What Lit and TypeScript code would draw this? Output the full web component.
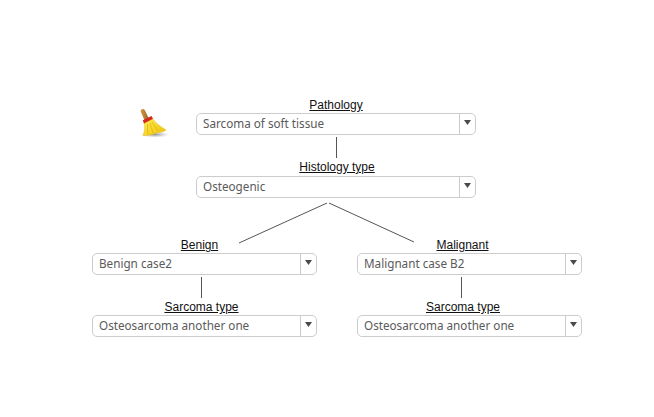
import { LitElement, html, css } from "lit";
import { customElement, property } from "lit/decorators.js";

@customElement("tree-node")
class TreeNode extends LitElement {
  @property() label = "";
  @property() value = "";
  @property({ type: Number }) shift = 0;
  static styles = css`
    :host { display: block; }
    .label { height: 15px; line-height: 15px; font-size: 12px; color: #111; text-align: center; text-decoration: underline; white-space: nowrap; }
    :host([tall]) .label { height: 16px; }
    .select { box-sizing: border-box; height: 22px; display: flex; border: 1px solid #ccc; border-radius: 5px; background: #fff; }
    .value { flex: 1; padding-left: 6px; line-height: 18px; font-size: 11.7px; color: #5a5a5a; white-space: nowrap; font-family: "Noto Sans", sans-serif; }
    .arrow { width: 16px; border-left: 1px solid #ccc; display: flex; align-items: center; justify-content: center; padding-bottom: 4px; padding-right: 1px; box-sizing: border-box; }
    svg { display: block; }
  `;
  render() {
    return html`
      <div class="label" style="padding-left:${Math.max(0, -this.shift)}px;padding-right:${Math.max(0, this.shift)}px">${this.label}</div>
      <div class="select">
        <div class="value">${this.value}</div>
        <div class="arrow"><svg width="7" height="5" viewBox="0 0 7 5"><path d="M0 0H7L3.5 5Z" fill="#4a4a4a"/></svg></div>
      </div>`;
  }
}

@customElement("app-root")
class AppRoot extends LitElement {
  static styles = css`
    :host { display: block; width: 654px; height: 417px; background: #fff; font-family: "Liberation Sans", Arial, sans-serif; }
    .page { box-sizing: border-box; height: 417px; padding-top: 98px; display: flex; flex-direction: column; }
    .top { display: flex; margin-left: 138px; }
    .broom { margin-top: 8px; margin-right: 26px; width: 32px; flex: none; display: block; height: 32px; }
    .col { width: 280px; }
    .conn { height: 25px; display: flex; justify-content: center; padding-top: 2px; box-sizing: border-box; }
    .conn i { display: block; width: 1px; height: 21px; background: #555; }
    .branches { display: block; margin-left: 196px; overflow: visible; }
    .grid { display: grid; grid-template-columns: 225px 225px; column-gap: 40px; margin-left: 92px; }
    .conn.sub { justify-content: flex-start; }
    .conn.l { padding-left: 109px; }
    .conn.r { padding-left: 104px; }
  `;
  render() {
    return html`
      <div class="page">
        <div class="top">
          <svg class="broom" viewBox="0 0 32 32">
            <defs>
              <radialGradient id="sh"><stop offset="0" stop-color="#777" stop-opacity=".8"/><stop offset="1" stop-color="#aaa" stop-opacity="0"/></radialGradient>
              <linearGradient id="y" x1="0" y1="0" x2="1" y2="1"><stop offset="0" stop-color="#fff25a"/><stop offset="1" stop-color="#eebc00"/></linearGradient>
              <linearGradient id="h" x1="0" y1="0" x2="1" y2="0"><stop offset="0" stop-color="#d99a45"/><stop offset="1" stop-color="#9a6420"/></linearGradient>
            </defs>
            <ellipse cx="17" cy="28.5" rx="14" ry="3.2" fill="url(#sh)"/>
            <path d="M2.5 5 Q3 2.8 5.3 3 Q6.5 3.2 7 4.5 L10.8 12.5 L6.6 14.4 Z" fill="url(#h)"/>
            <path d="M6 16.5 L14.5 12.5 C18 17 22 20.5 28 24 C24 27 19 26.5 19 26.5 C15 29 9 29.5 5 29.5 C7 25 7 20 6 16.5 Z" fill="url(#y)" stroke="#dcae00" stroke-width=".4"/>
            <path d="M9.5 18 L9.5 27.5 M12 17 L15 27 M14 16 L20 25" stroke="#d9a900" stroke-width=".6" fill="none"/>
            <path d="M4.8 14.2 L13.4 10 L15 12.8 L6 17.4 Z" fill="#d3271c"/>
          </svg>
          <div class="col">
            <tree-node label="Pathology" value="Sarcoma of soft tissue"></tree-node>
            <div class="conn"><i></i></div>
            <tree-node tall label="Histology type" value="Osteogenic" shift="-2"></tree-node>
          </div>
        </div>
        <svg class="branches" width="280" height="40" viewBox="196 198 280 40">
          <path d="M327 203 L239 243 M329 203 L414 242" stroke="#555" stroke-width="1" fill="none"/>
        </svg>
        <div class="grid">
          <div>
            <tree-node label="Benign" value="Benign case2" shift="10"></tree-node>
            <div class="conn sub l"><i></i></div>
            <tree-node label="Sarcoma type" value="Osteosarcoma another one" shift="6"></tree-node>
          </div>
          <div>
            <tree-node label="Malignant" value="Malignant case B2" shift="14"></tree-node>
            <div class="conn sub r"><i></i></div>
            <tree-node label="Sarcoma type" value="Osteosarcoma another one" shift="13"></tree-node>
          </div>
        </div>
      </div>`;
  }
}
